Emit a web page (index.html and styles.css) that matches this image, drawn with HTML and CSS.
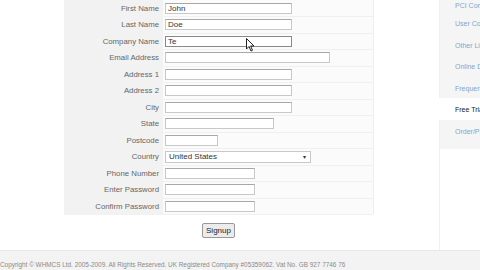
FILE: index.html
```html
<!DOCTYPE html>
<html lang="en">
<head>
  <meta charset="UTF-8" />
  <title>Order - Signup</title>
  <link rel="stylesheet" href="styles.css">
</head>
<body>

  <div class="page">
    <div class="gutter"></div>

    <div class="main">
      <table class="signup">
        <tr><td class="label">First Name</td><td class="field"><input class="w-md" type="text" value="John" /></td></tr>
        <tr><td class="label">Last Name</td><td class="field"><input class="w-md" type="text" value="Doe" /></td></tr>
        <tr><td class="label">Company Name</td><td class="field"><input class="w-md focus" type="text" value="Te" /></td></tr>
        <tr><td class="label">Email Address</td><td class="field"><input class="w-lg" type="text" /></td></tr>
        <tr><td class="label">Address 1</td><td class="field"><input class="w-md" type="text" /></td></tr>
        <tr><td class="label">Address 2</td><td class="field"><input class="w-md" type="text" /></td></tr>
        <tr><td class="label">City</td><td class="field"><input class="w-md" type="text" /></td></tr>
        <tr><td class="label">State</td><td class="field"><input class="w-st" type="text" /></td></tr>
        <tr><td class="label">Postcode</td><td class="field"><input class="w-xs" type="text" /></td></tr>
        <tr><td class="label">Country</td><td class="field">
          <div class="select">United States<span class="arrow">&#9662;</span></div>
        </td></tr>
        <tr><td class="label">Phone Number</td><td class="field"><input class="w-sm" type="text" /></td></tr>
        <tr><td class="label">Enter Password</td><td class="field"><input class="w-sm" type="password" /></td></tr>
        <tr><td class="label">Confirm Password</td><td class="field"><input class="w-sm" type="password" /></td></tr>
      </table>

      <div class="actions">
        <button type="submit">Signup</button>
      </div>
    </div>

    <div class="sidebar">
      <ul>
        <li><a href="#">PCI Compliance</a></li>
        <li><a href="#">User Comments</a></li>
        <li><a href="#">Other Links</a></li>
        <li><a href="#">Online Demo</a></li>
        <li><a href="#">Frequently Asked</a></li>
        <li class="active"><a href="#">Free Trial</a></li>
        <li><a href="#">Order/Pricing</a></li>
      </ul>
    </div>
  </div>

  <footer>
    <p>Copyright &copy; WHMCS Ltd. 2005-2009. All Rights Reserved. UK Registered Company #05359062. Vat No. GB 927 7746 76</p>
  </footer>

  <svg class="cursor" width="9" height="14" viewBox="0 0 9 14">
    <path d="M0.5 0.5 L0.5 11 L3 8.5 L5 13 L6.5 12.3 L4.6 8 L8 8 Z" fill="#fff" stroke="#222" stroke-width="1" />
  </svg>

</body>
</html>
```

FILE: styles.css
```css
* {
  margin: 0;
  padding: 0;
  box-sizing: border-box;
}

body, html {
  height: 100%;
  background: #fff;
  font-family: 'Liberation Sans', Arial, sans-serif;
  overflow: hidden;
}

.page {
  display: flex;
  height: 250px;
}

.gutter {
  width: 64px;
  flex-shrink: 0;
}

.main {
  width: 310px;
  flex-shrink: 0;
  border-right: 1px solid #eee;
  height: 214px;
}

.signup {
  width: 309px;
  border-collapse: collapse;
}

.signup tr {
  height: 16.5px;
}

.label {
  width: 99px;
  background: #f2f2f2;
  color: #666;
  font-size: 7.8px;
  text-align: right;
  padding-right: 4px;
  vertical-align: middle;
  white-space: nowrap;
}

.field {
  background: #fbfbfb;
  border-bottom: 1px solid #f0f0f0;
  padding-left: 2px;
  vertical-align: middle;
}

input {
  display: block;
  height: 11px;
  border: 1px solid #c8c8c8;
  border-top-color: #a8a8a8;
  background: #fff;
  font-family: 'Liberation Sans', Arial, sans-serif;
  font-size: 8px;
  color: #333;
  padding: 0 2px;
  outline: none;
}

input.focus {
  border-color: #8a8a8a;
}

.w-md { width: 127px; }
.w-lg { width: 165px; }
.w-st { width: 109px; }
.w-xs { width: 53px; }
.w-sm { width: 90px; }

.select {
  position: relative;
  width: 146px;
  height: 12px;
  border: 1px solid #c8c8c8;
  background: #fff;
  font-size: 8px;
  line-height: 10px;
  color: #333;
  padding-left: 3px;
}

.arrow {
  position: absolute;
  right: 4px;
  top: 0;
  font-size: 6px;
  color: #333;
}

.actions {
  display: flex;
  justify-content: center;
  padding-top: 8px;
}

button {
  background: #ececec;
  border: 1px solid #999;
  border-radius: 2px;
  color: #222;
  font-family: 'Liberation Sans', Arial, sans-serif;
  font-size: 8px;
  padding: 2px 3px;
  height: 15px;
}

.sidebar {
  margin-left: 65px;
  flex: 1;
  min-width: 0;
  border-left: 1px solid #f0f0f0;
}

.sidebar ul {
  list-style: none;
  background: #f5f5f5;
  padding-bottom: 8px;
}

.sidebar li {
  height: 21.5px;
  padding-left: 15px;
  font-size: 7px;
  line-height: 8px;
  white-space: nowrap;
  overflow: hidden;
}

.sidebar li:first-child {
  height: 12px;
  line-height: 0;
}

.sidebar li a {
  color: #7fa6cf;
  text-decoration: none;
  display: block;
  padding-top: 8px;
}

.sidebar li:first-child a {
  padding-top: 6px;
}

.sidebar li.active {
  background: #fff;
  margin-left: -2px;
  padding-left: 17px;
}

.sidebar li.active a {
  color: #222;
}

footer {
  height: 20px;
  background: #f3f3f3;
  border-top: 1px solid #e8e8e8;
  color: #8a8a8a;
  font-size: 6.4px;
  white-space: nowrap;
  padding-top: 10px;
}

.cursor {
  position: absolute;
  left: 246px;
  top: 38px;
}
```
